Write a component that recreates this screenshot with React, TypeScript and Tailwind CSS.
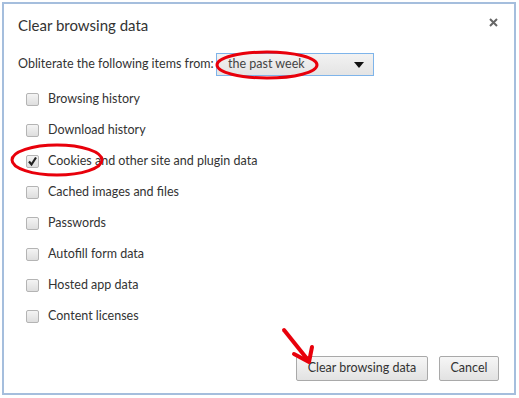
import React from "react";

const items = [
  { label: "Browsing history", checked: false },
  { label: "Download history", checked: false },
  { label: "Cookies and other site and plugin data", checked: true },
  { label: "Cached images and files", checked: false },
  { label: "Passwords", checked: false },
  { label: "Autofill form data", checked: false },
  { label: "Hosted app data", checked: false },
  { label: "Content licenses", checked: false },
];

function Checkbox({ checked }: { checked: boolean }) {
  return (
    <span className="flex h-[13px] w-[13px] items-center justify-center rounded-[2px] border border-[#b4b4b4] bg-gradient-to-b from-[#f4f4f4] to-[#dedede]">
      {checked && (
        <svg width="11" height="11" viewBox="0 0 11 11">
          <path d="M2 5.5 L4.5 8.5 L9 1.5" fill="none" stroke="#222" strokeWidth="2.2" />
        </svg>
      )}
    </span>
  );
}

export default function App() {
  return (
    <div
      className="relative h-[398px] w-[519px] bg-white p-[2px] text-[12.5px] text-[#333]"
      style={{ fontFamily: 'Lato, "Open Sans", sans-serif' }}
    >
      <div className="relative flex h-[393px] w-[514px] flex-col border-2 border-[#a5bedd] bg-white pl-[14px] pr-[15px]">
        <div className="flex items-center justify-between pt-[11px]">
          <h1 className="text-[15px] leading-[20px] text-[#333]">Clear browsing data</h1>
          <svg width="9" height="9" viewBox="0 0 9 9" className="mr-[1px] mt-[-6px]">
            <path d="M1 1 L8 8 M8 1 L1 8" stroke="#666" strokeWidth="2" />
          </svg>
        </div>

        <div className="mt-[18px] flex items-center">
          <span className="w-[198px] text-[12.5px]">Obliterate the following items from:</span>
          <div className="flex h-[23px] w-[158px] items-center justify-between border border-[#7eb4ea] bg-gradient-to-b from-[#f2f2f2] to-[#e4e4e4] pl-[11px] pr-[9px]">
            <span className="text-[12.5px] text-[#444]">the past week</span>
            <svg width="10" height="6" viewBox="0 0 10 6">
              <path d="M0 0 L10 0 L5 6 Z" fill="#111" />
            </svg>
          </div>
        </div>

        <div className="mt-[8px] flex flex-col pl-[8px]">
          {items.map((it) => (
            <div key={it.label} className="flex h-[31px] items-center gap-[9px]">
              <Checkbox checked={it.checked} />
              <span className="text-[12.5px]">{it.label}</span>
            </div>
          ))}
        </div>

        <div className="mt-auto mb-[12px] flex justify-end gap-[11px]">
          <button className="h-[25px] w-[132px] rounded-[2px] border border-[#a9a9a9] bg-gradient-to-b from-[#f6f6f6] to-[#e2e2e2] text-[12.5px] text-[#333]">
            Clear browsing data
          </button>
          <button className="h-[25px] w-[60px] rounded-[2px] border border-[#a9a9a9] bg-gradient-to-b from-[#f6f6f6] to-[#e2e2e2] text-[12.5px] text-[#333]">
            Cancel
          </button>
        </div>
      </div>

      <svg className="pointer-events-none absolute left-0 top-0" width="519" height="398">
        <ellipse cx="267" cy="65" rx="50" ry="13" fill="none" stroke="#e8000b" strokeWidth="3" />
        <ellipse cx="57" cy="160" rx="45" ry="15" fill="none" stroke="#e8000b" strokeWidth="3" />
        <path d="M284 330 L308 360" stroke="#e8000b" strokeWidth="4" strokeLinecap="round" />
        <path d="M294 354 L309 362 L312 347" fill="none" stroke="#e8000b" strokeWidth="4" strokeLinecap="round" strokeLinejoin="round" />
      </svg>
    </div>
  );
}
